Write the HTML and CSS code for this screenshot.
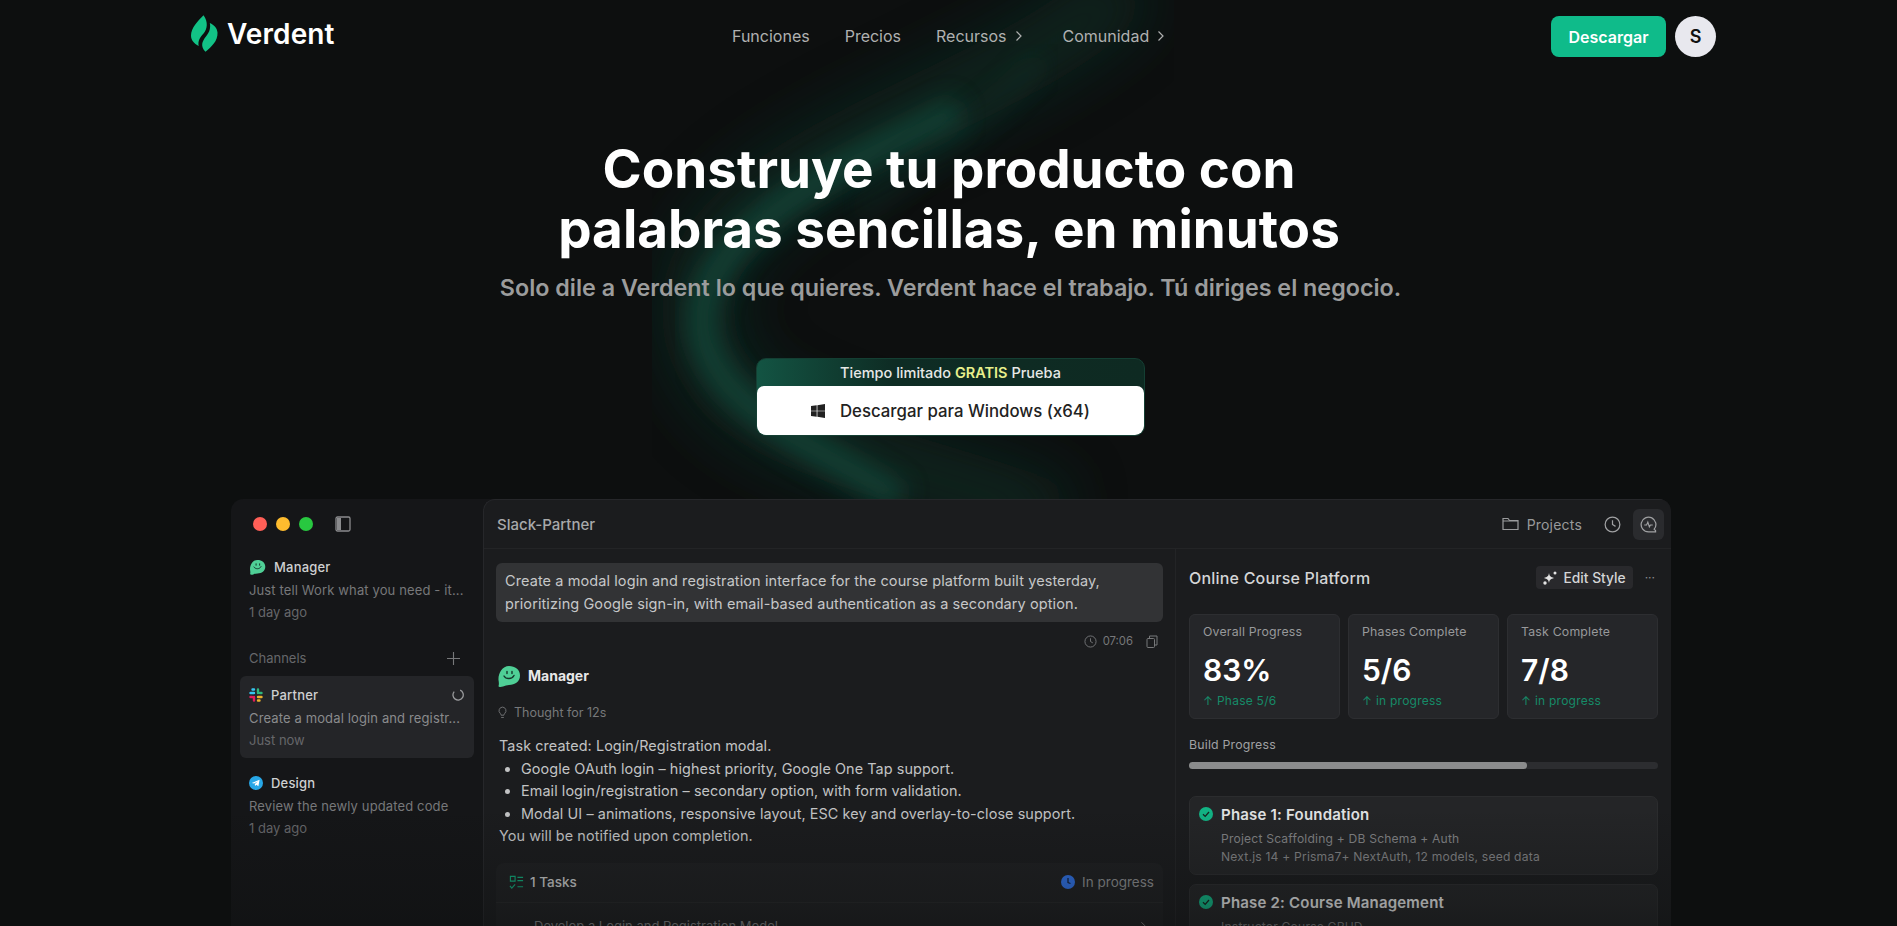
FILE: index.html
```html
<!DOCTYPE html>
<html lang="es">
<head>
    <meta charset="UTF-8">
    <meta name="viewport" content="width=device-width, initial-scale=1.0">
    <title>Verdent</title>
    <link rel="stylesheet" href="styles.css">
</head>
<body>
    <div class="page">
        <!-- background swoosh behind the hero -->
        <svg class="swoosh" viewBox="0 0 1897 926" width="1897" height="926">
            <defs>
                <filter id="blur-wide"><feGaussianBlur stdDeviation="30"/></filter>
                <filter id="blur-mid"><feGaussianBlur stdDeviation="12"/></filter>
            </defs>
            <path d="M1130 -20 C1060 60 900 110 790 180 C690 245 670 320 730 390 C790 450 930 470 1060 520" fill="none" stroke="#0f3a2f" stroke-width="70" filter="url(#blur-wide)" opacity="0.5"/>
            <path d="M960 110 C900 140 830 170 770 215 C700 270 680 325 728 385 C770 430 830 455 900 500" fill="none" stroke="#14614d" stroke-width="30" filter="url(#blur-mid)" opacity="0.5"/>
            <path d="M1040 60 C980 130 900 170 860 215" fill="none" stroke="#123c32" stroke-width="20" filter="url(#blur-mid)" opacity="0.3"/>
        </svg>

        <header class="site-header">
            <a class="logo">
                <svg class="logo-mark" viewBox="0 0 28 38" width="27" height="37">
                    <path fill="#12c286" d="M13 0C7 6 0 13 0 21c0 5 3 8 8 11-1-5 1-9 5-13 4-5 5-12 0-19z"/>
                    <path fill="#12c286" d="M15 38c6-5 13-11 12.500-20-.5-5-3.500-8-8-10 1 5 0 9-4 14-4 5-6 10-.5 16z"/>
                </svg>
                <span>Verdent</span>
            </a>
            <nav class="nav-links">
                <a>Funciones</a>
                <a>Precios</a>
                <a class="nav-recursos">Recursos <svg class="chev" viewBox="0 0 8 12" width="8" height="12"><path d="M1.500 1.500 6 6l-4.500 4.500" fill="none" stroke="currentColor" stroke-width="1.200"/></svg></a>
                <a>Comunidad <svg class="chev" viewBox="0 0 8 12" width="8" height="12"><path d="M1.500 1.500 6 6l-4.500 4.500" fill="none" stroke="currentColor" stroke-width="1.200"/></svg></a>
            </nav>
            <div class="header-actions">
                <button class="btn-download">Descargar</button>
                <div class="avatar">S</div>
            </div>
        </header>

        <section class="hero">
            <h1>Construye tu producto con<br>palabras sencillas, en minutos</h1>
            <p class="hero-sub">Solo dile a Verdent lo que quieres. Verdent hace el trabajo. Tú diriges el negocio.</p>
            <div class="cta">
                <div class="cta-badge">Tiempo limitado <b>GRATIS</b> Prueba</div>
                <button class="cta-button">
                    <svg viewBox="0 0 16 16" width="14" height="14"><path fill="#222" d="M0 2.300 6.500 1.400v6.200H0zM7.300 1.300 16 0v7.600H7.300zM0 8.400h6.500v6.200L0 13.700zM7.300 8.400H16V16l-8.700-1.300z"/></svg>
                    Descargar para Windows (x64)
                </button>
            </div>
        </section>

        <section class="app">
            <aside class="sidebar">
                <div class="window-bar">
                    <i class="dot red"></i><i class="dot yellow"></i><i class="dot green"></i>
                    <svg class="panel-icon" viewBox="0 0 16 16" width="16" height="16"><rect x="1" y="1" width="14" height="14" rx="1.500" fill="none" stroke="#8a8b8d" stroke-width="1.300"/><rect x="2" y="2" width="4" height="12" fill="#8a8b8d"/></svg>
                </div>
                <div class="chan chan-manager">
                    <div class="chan-name">
                        <svg viewBox="0 0 24 22" width="17" height="16"><path fill="#4fcf96" d="M12 1c6 0 11 3.500 11 9.500S18 20 12 20c-2 0-4 .5-6 1.500-1.500.5-4.500.8-4.500-.5C2 20 2 18 1.500 15 1 9 5 1 12 1z"/><path d="M7 11c2 3.500 8 3.500 10-.5" fill="none" stroke="#15352a" stroke-width="1.400" stroke-linecap="round"/><path d="M10 6.500v2M15 6.500v2" stroke="#15352a" stroke-width="1.400" stroke-linecap="round"/></svg>
                        Manager
                    </div>
                    <div class="chan-text">Just tell Work what you need - it...</div>
                    <div class="chan-time">1 day ago</div>
                </div>
                <div class="channels-head">Channels
                    <svg viewBox="0 0 14 14" width="13" height="13"><path d="M7 0v14M0 7h14" stroke="#77787a" stroke-width="1.200"/></svg>
                </div>
                <div class="chan active">
                    <div class="chan-name">
                        <svg viewBox="0 0 14 14" width="14" height="14">
                            <path d="M5 1.500H3.500M5 5H1.500" fill="none" stroke="#36c5f0" stroke-width="2.400" stroke-linecap="round"/>
                            <path d="M12.500 5H11M9 1.500V5" fill="none" stroke="#2eb67d" stroke-width="2.400" stroke-linecap="round"/>
                            <path d="M9 12.500H10.500M9 9h3.500" fill="none" stroke="#ecb22e" stroke-width="2.400" stroke-linecap="round"/>
                            <path d="M1.500 9H3M5 9v3.500" fill="none" stroke="#e01e5a" stroke-width="2.400" stroke-linecap="round"/>
                        </svg>
                        Partner
                        <svg class="spinner" viewBox="0 0 14 14" width="12" height="12"><path d="M9.500 1.400A6 6 0 1 1 2.600 3" fill="none" stroke="#9a9b9d" stroke-width="1.500"/></svg>
                    </div>
                    <div class="chan-text">Create a modal login and registr...</div>
                    <div class="chan-time">Just now</div>
                </div>
                <div class="chan chan-design">
                    <div class="chan-name">
                        <svg viewBox="0 0 14 14" width="14" height="14"><circle cx="7" cy="7" r="7" fill="#27a7e7"/><path fill="#fff" d="M2.800 6.900 10.600 3.800 9.400 10.300 7.300 8.800 6 10l-.2-2.100 3-2.500-3.800 2.200z"/></svg>
                        Design
                    </div>
                    <div class="chan-text">Review the newly updated code</div>
                    <div class="chan-time">1 day ago</div>
                </div>
            </aside>

            <div class="workspace">
                <div class="workspace-head">
                    <span class="workspace-title">Slack-Partner</span>
                    <div class="head-tools">
                        <span class="tool-projects">
                            <svg viewBox="0 0 17 14" width="17" height="14"><path d="M1 12.500V1.500h5l1.500 2H16v9z" fill="none" stroke="#9a9b9d" stroke-width="1.200"/><path d="M1 4h15" stroke="#9a9b9d" stroke-width="1"/></svg>
                            Projects
                        </span>
                        <svg class="tool-clock" viewBox="0 0 18 18" width="17" height="17"><circle cx="9" cy="9" r="7.800" fill="none" stroke="#a0a1a3" stroke-width="1.300"/><path d="M9 4.500V9l3.200 2" fill="none" stroke="#a0a1a3" stroke-width="1.300"/></svg>
                        <span class="tool-active">
                            <svg viewBox="0 0 18 18" width="17" height="17"><path d="M16.500 15.500 15 14A7.800 7.800 0 1 0 9 16.800h7.500z" fill="none" stroke="#a0a1a3" stroke-width="1.300"/><path d="M4.500 9.500h2.500l1.300-3 1.600 5 1.200-2h2.400" fill="none" stroke="#a0a1a3" stroke-width="1.200"/></svg>
                        </span>
                    </div>
                </div>
                <div class="workspace-body">
                    <div class="chat">
                        <div class="bubble">Create a modal login and registration interface for the course platform built yesterday, prioritizing Google sign-in, with email-based authentication as a secondary option.</div>
                        <div class="bubble-meta">
                            <svg viewBox="0 0 14 14" width="13" height="13"><circle cx="7" cy="7" r="6" fill="none" stroke="#77787a" stroke-width="1"/><path d="M7 3.500V7l2.500 1.500" fill="none" stroke="#77787a"/></svg>
                            <span>07:06</span>
                            <svg class="copy" viewBox="0 0 12 13" width="12" height="13"><rect x="1" y="3.500" width="7.500" height="9" rx="1" fill="none" stroke="#77787a"/><path d="M3.500 3.500V1h7.500v9H8.500" fill="none" stroke="#77787a"/></svg>
                        </div>
                        <div class="agent">
                            <svg viewBox="0 0 24 22" width="24" height="22"><path fill="#4fcf96" d="M12 1c6 0 11 3.500 11 9.500S18 20 12 20c-2 0-4 .5-6 1.500-1.500.5-4.500.8-4.500-.5C2 20 2 18 1.500 15 1 9 5 1 12 1z"/><path d="M7 11c2 3.500 8 3.500 10-.5" fill="none" stroke="#15352a" stroke-width="1.400" stroke-linecap="round"/><path d="M10 6.500v2M15 6.500v2" stroke="#15352a" stroke-width="1.400" stroke-linecap="round"/></svg>
                            Manager
                        </div>
                        <div class="thought">
                            <svg viewBox="0 0 10 14" width="9" height="13"><path d="M5 1a4 4 0 0 0-2.500 7c.6.6.8 1 .9 2h3.200c.1-1 .3-1.400.9-2A4 4 0 0 0 5 1zM3.500 12.500h3" fill="none" stroke="#77787a"/></svg>
                            Thought for 12s
                        </div>
                        <div class="reply">
                            <p>Task created: Login/Registration modal.</p>
                            <ul>
                                <li>Google OAuth login – highest priority, Google One Tap support.</li>
                                <li>Email login/registration – secondary option, with form validation.</li>
                                <li>Modal UI – animations, responsive layout, ESC key and overlay-to-close support.</li>
                            </ul>
                            <p>You will be notified upon completion.</p>
                        </div>
                        <div class="tasks">
                            <div class="tasks-head">
                                <svg viewBox="0 0 16 16" width="15" height="15"><path d="M1.500 1.500h5v5h-5zM9 2.500h6M9 6h6M9 12.500h6M1 11.500l2 2.500 3.500-4" fill="none" stroke="#12a87a" stroke-width="1.200"/></svg>
                                <b>1 Tasks</b>
                                <span class="tasks-state">
                                    <svg viewBox="0 0 14 14" width="14" height="14"><circle cx="7" cy="7" r="7" fill="#2f6fe0"/><path d="M7 3v4.500l2.500 1" fill="none" stroke="#13233f" stroke-width="1.300"/></svg>
                                    In progress
                                </span>
                            </div>
                            <div class="tasks-row">Develop a Login and Registration Model
                                <svg viewBox="0 0 8 12" width="7" height="10"><path d="M1.500 1.500 6 6l-4.500 4.500" fill="none" stroke="#888" stroke-width="1.200"/></svg>
                            </div>
                        </div>
                    </div>

                    <div class="project">
                        <div class="project-head">
                            <span class="project-title">Online Course Platform</span>
                            <span class="edit-style">
                                <svg viewBox="0 0 14 14" width="14" height="14"><path fill="#e4e4e4" d="M7 2c.5 3 1.500 4 5 5-3.500 1-4.500 2-5 5-.5-3-1.500-4-5-5 3.500-1 4.500-2 5-5z" transform="translate(-1 0)"/><circle cx="12" cy="2" r="1.500" fill="#e4e4e4"/><circle cx="2" cy="12" r="1.700" fill="#e4e4e4"/></svg>
                                Edit Style
                            </span>
                            <span class="more">···</span>
                        </div>
                        <div class="stats">
                            <div class="stat">
                                <div class="stat-label">Overall Progress</div>
                                <div class="stat-value">83%</div>
                                <div class="stat-note">↑ Phase 5/6</div>
                            </div>
                            <div class="stat">
                                <div class="stat-label">Phases Complete</div>
                                <div class="stat-value">5/6</div>
                                <div class="stat-note">↑ in progress</div>
                            </div>
                            <div class="stat">
                                <div class="stat-label">Task Complete</div>
                                <div class="stat-value">7/8</div>
                                <div class="stat-note">↑ in progress</div>
                            </div>
                        </div>
                        <div class="build-label">Build Progress</div>
                        <div class="build-track"><div class="build-fill" style="width: 72%"></div></div>
                        <div class="phases">
                            <div class="phase">
                                <div class="phase-title">
                                    <svg viewBox="0 0 14 14" width="14" height="14"><circle cx="7" cy="7" r="7" fill="#12b384"/><path d="M4 7.200 6.200 9.400 10 5" fill="none" stroke="#15241f" stroke-width="1.300"/></svg>
                                    Phase 1: Foundation
                                </div>
                                <div class="phase-desc">Project Scaffolding + DB Schema + Auth<br>Next.js 14 + Prisma7+ NextAuth, 12 models, seed data</div>
                            </div>
                            <div class="phase">
                                <div class="phase-title">
                                    <svg viewBox="0 0 14 14" width="14" height="14"><circle cx="7" cy="7" r="7" fill="#12b384"/><path d="M4 7.200 6.200 9.400 10 5" fill="none" stroke="#15241f" stroke-width="1.300"/></svg>
                                    Phase 2: Course Management
                                </div>
                                <div class="phase-desc">Instructor Course CRUD</div>
                            </div>
                        </div>
                    </div>
                </div>
            </div>
            <div class="app-fade"></div>
        </section>
    </div>
</body>
</html>
```

FILE: styles.css
```css
* {
    margin: 0;
    padding: 0;
    box-sizing: border-box;
}

body {
    background: #0d0f0f;
    font-family: Inter, "Noto Sans", sans-serif;
    color: #fff;
    overflow: hidden;
}

.page {
    position: relative;
    height: 926px;
    overflow: hidden;
}

.swoosh {
    position: absolute;
    top: 0;
    left: 0;
}

/* header */
.site-header {
    position: relative;
    display: flex;
    align-items: center;
    padding: 16px 181px 0 191px;
}

.logo {
    display: flex;
    align-items: center;
    gap: 9px;
    width: 144px;
    margin-top: -6px;
    font-size: 28px;
    font-weight: 600;
    letter-spacing: 0.1px;
}

.nav-links {
    display: flex;
    align-items: center;
    gap: 35px;
    margin-left: 397px;
    margin-top: -2px;
    font-size: 16px;
    font-weight: 400;
    color: #b0b1b1;
}

.nav-links a {
    display: flex;
    align-items: center;
    gap: 8px;
}

.nav-links .nav-recursos {
    margin-right: 5px;
}

.header-actions {
    display: flex;
    align-items: center;
    gap: 9px;
    margin-left: auto;
}

.btn-download {
    width: 115px;
    height: 41px;
    background: #0fbb8a;
    color: #fff;
    border: none;
    border-radius: 8px;
    font-family: inherit;
    font-size: 16px;
    font-weight: 600;
}

.avatar {
    width: 41px;
    height: 41px;
    border-radius: 50%;
    background: #e8e8ee;
    color: #111;
    display: flex;
    align-items: center;
    justify-content: center;
    font-size: 18px;
    font-weight: 600;
}

/* hero */
.hero {
    position: relative;
    display: flex;
    flex-direction: column;
    align-items: center;
    padding-left: 4px;
}

h1 {
    margin-top: 82px;
    margin-right: 3px;
    font-size: 53px;
    line-height: 60px;
    font-weight: 700;
    text-align: center;
}

.hero-sub {
    margin-top: 14px;
    font-size: 23.300px;
    line-height: 30px;
    font-weight: 600;
    color: #9b9c9c;
}

.cta {
    width: 389px;
    margin-top: 55px;
    border: 1px solid #143f33;
    border-radius: 10px;
    background: linear-gradient(90deg, #135443 0%, #0e2c24 35%, #0e2a22 100%);
    overflow: hidden;
}

.cta-badge {
    height: 27px;
    line-height: 27px;
    text-align: center;
    font-size: 14.500px;
    font-weight: 500;
    color: #e6e8e6;
}

.cta-badge b {
    color: #e8f08c;
    font-weight: 600;
}

.cta-button {
    width: 100%;
    height: 49px;
    background: #fff;
    border: none;
    border-radius: 7px;
    display: flex;
    align-items: center;
    justify-content: center;
    gap: 15px;
    font-family: inherit;
    font-size: 16.800px;
    font-weight: 500;
    color: #222;
}

/* app preview */
.app {
    position: relative;
    display: flex;
    width: 1440px;
    height: 500px;
    margin: 63px 0 0 231px;
    background: #151618;
    border-radius: 12px 12px 0 0;
    overflow: hidden;
}

.app-fade {
    position: absolute;
    left: 0;
    right: 0;
    bottom: 0;
    height: 190px;
    background: linear-gradient(180deg, rgba(13, 15, 15, 0) 0%, rgba(13, 15, 15, 0.32) 50%, rgba(13, 15, 15, 0.88) 100%);
    pointer-events: none;
}

.sidebar {
    width: 252px;
    flex: none;
    padding: 17px 9px 0;
    font-size: 13px;
}

.window-bar {
    display: flex;
    align-items: center;
    height: 15px;
    padding-left: 13px;
}

.dot {
    width: 14px;
    height: 14px;
    border-radius: 50%;
    margin-right: 9px;
}

.dot.red { background: #ff5f57; }
.dot.yellow { background: #febc2e; }
.dot.green { background: #28c840; }

.panel-icon {
    margin-left: 13px;
}

.chan {
    padding: 9px 9px 8px;
    border-radius: 6px;
}

.chan-manager {
    margin-top: 17px;
}

.chan-design {
    margin-top: 6px;
}

.chan.active {
    background: #242528;
    margin-top: 8px;
}

.chan-name {
    display: flex;
    align-items: center;
    gap: 8px;
    height: 20px;
    font-weight: 500;
    color: #cfd0d1;
    letter-spacing: 0.2px;
}

.spinner {
    margin-left: auto;
    margin-right: 1px;
}

.chan-text {
    margin-top: 3px;
    line-height: 20px;
    color: #77787a;
    letter-spacing: 0.13px;
    white-space: nowrap;
}

.chan-time {
    margin-top: 2px;
    line-height: 20px;
    font-size: 13px;
    color: #66676a;
}

.chan.active .chan-text {
    color: #8a8b8d;
}

.channels-head {
    display: flex;
    align-items: center;
    justify-content: space-between;
    margin-top: 18px;
    padding: 0 14px 0 9px;
    height: 20px;
    font-size: 13px;
    color: #66676a;
}

.workspace {
    flex: 1;
    background: #1b1c1e;
    border: 1px solid #26272a;
    border-bottom: none;
    border-right: none;
    border-radius: 12px 0 0 0;
}

.workspace-head {
    display: flex;
    align-items: center;
    justify-content: space-between;
    height: 49px;
    padding: 0 7px 0 13px;
    border-bottom: 1px solid #232426;
}

.workspace-title {
    font-size: 15px;
    font-weight: 500;
    color: #a8a9aa;
}

.head-tools {
    display: flex;
    align-items: center;
}

.tool-projects {
    display: flex;
    align-items: center;
    gap: 8px;
    font-size: 14px;
    color: #98999b;
    letter-spacing: 0.2px;
}

.tool-clock {
    margin: 0 12px 0 22px;
}

.tool-active {
    display: flex;
    align-items: center;
    justify-content: center;
    width: 31px;
    height: 31px;
    border-radius: 6px;
    background: #2a2b2e;
}

.workspace-body {
    display: flex;
}

.chat {
    width: 692px;
    flex: none;
    padding: 14px 12px 0 12px;
    border-right: 1px solid #232426;
}

.bubble {
    padding: 7px 9px;
    background: #323335;
    border-radius: 6px;
    font-size: 14.500px;
    line-height: 22.500px;
    color: #c6c7c8;
    letter-spacing: 0.09px;
}

.bubble-meta {
    display: flex;
    align-items: center;
    justify-content: flex-end;
    gap: 6px;
    height: 16px;
    margin-top: 11px;
    padding-right: 5px;
    font-size: 11.300px;
    color: #77787a;
}

.bubble-meta .copy {
    margin-left: 7px;
}

.agent {
    display: flex;
    align-items: center;
    gap: 7px;
    height: 21px;
    margin-top: 16px;
    padding-left: 1px;
    font-size: 14px;
    font-weight: 700;
    color: #e8e8e8;
}

.thought {
    display: flex;
    align-items: center;
    gap: 7px;
    height: 16px;
    margin-top: 18px;
    padding-left: 2px;
    font-size: 12.500px;
    color: #77787a;
}

.reply {
    margin-top: 15px;
    padding-left: 3px;
    font-size: 14.400px;
    line-height: 22.500px;
    color: #c2c3c4;
    letter-spacing: 0.08px;
}

.reply ul {
    padding-left: 22px;
}

.tasks {
    margin-top: 15px;
    background: #1f2022;
    border-radius: 8px;
    height: 120px;
}

.tasks-head {
    display: flex;
    align-items: center;
    gap: 6px;
    height: 40px;
    padding: 0 9px 0 13px;
    border-bottom: 1px solid #262729;
    font-size: 13.500px;
    color: #c6c7c8;
}

.tasks-head b {
    font-weight: 500;
}

.tasks-state {
    display: flex;
    align-items: center;
    gap: 7px;
    margin-left: auto;
    color: #8a8b8d;
}

.tasks-row {
    display: flex;
    align-items: center;
    justify-content: space-between;
    padding: 15px 16px 0 38px;
    font-size: 13px;
    color: #8a8b8d;
}

.project {
    flex: 1;
    padding: 17px 13px 0 13px;
}

.project-head {
    display: flex;
    align-items: center;
    height: 23px;
}

.project-title {
    font-size: 16px;
    font-weight: 500;
    color: #d4d5d6;
    letter-spacing: 0.2px;
}

.edit-style {
    display: flex;
    align-items: center;
    gap: 6px;
    height: 23px;
    margin-left: auto;
    padding: 0 7px;
    background: #29292c;
    border-radius: 4px;
    font-size: 13.800px;
    font-weight: 500;
    color: #d4d5d6;
}

.more {
    margin-left: 12px;
    margin-right: 3px;
    color: #8a8b8d;
    font-size: 12px;
}

.stats {
    display: grid;
    grid-template-columns: repeat(3, 1fr);
    gap: 8px;
    margin-top: 25px;
}

.stat {
    height: 105px;
    padding: 8px 12px 0 13px;
    background: #252629;
    border: 1px solid #2d2e31;
    border-radius: 6px;
}

.stat-label {
    font-size: 12.300px;
    line-height: 18px;
    color: #98999b;
    letter-spacing: 0.2px;
}

.stat-value {
    margin-top: 11px;
    font-size: 30px;
    line-height: 36px;
    font-weight: 600;
}

.stat-note {
    margin-top: 4px;
    font-size: 12px;
    line-height: 18px;
    color: #168b68;
    letter-spacing: 0.25px;
}

.build-label {
    margin-top: 17px;
    font-size: 12.300px;
    line-height: 18px;
    color: #a0a1a3;
    letter-spacing: 0.2px;
}

.build-track {
    height: 7px;
    margin-top: 8px;
    background: #2c2d30;
    border-radius: 4px;
}

.build-fill {
    height: 100%;
    background: #8b8c8d;
    border-radius: 4px;
}

.phases {
    display: flex;
    flex-direction: column;
    gap: 9px;
    margin-top: 27px;
}

.phase {
    padding: 7px 9px 8px 9px;
    background: #242527;
    border: 1px solid #2b2c2e;
    border-radius: 7px;
}

.phase-title {
    display: flex;
    align-items: center;
    gap: 8px;
    height: 20px;
    font-size: 15px;
    font-weight: 600;
    color: #e2e3e4;
    letter-spacing: 0.2px;
}

.phase-desc {
    margin-top: 6px;
    padding-left: 22px;
    font-size: 12.100px;
    line-height: 18px;
    color: #828385;
    letter-spacing: 0.2px;
}
```
